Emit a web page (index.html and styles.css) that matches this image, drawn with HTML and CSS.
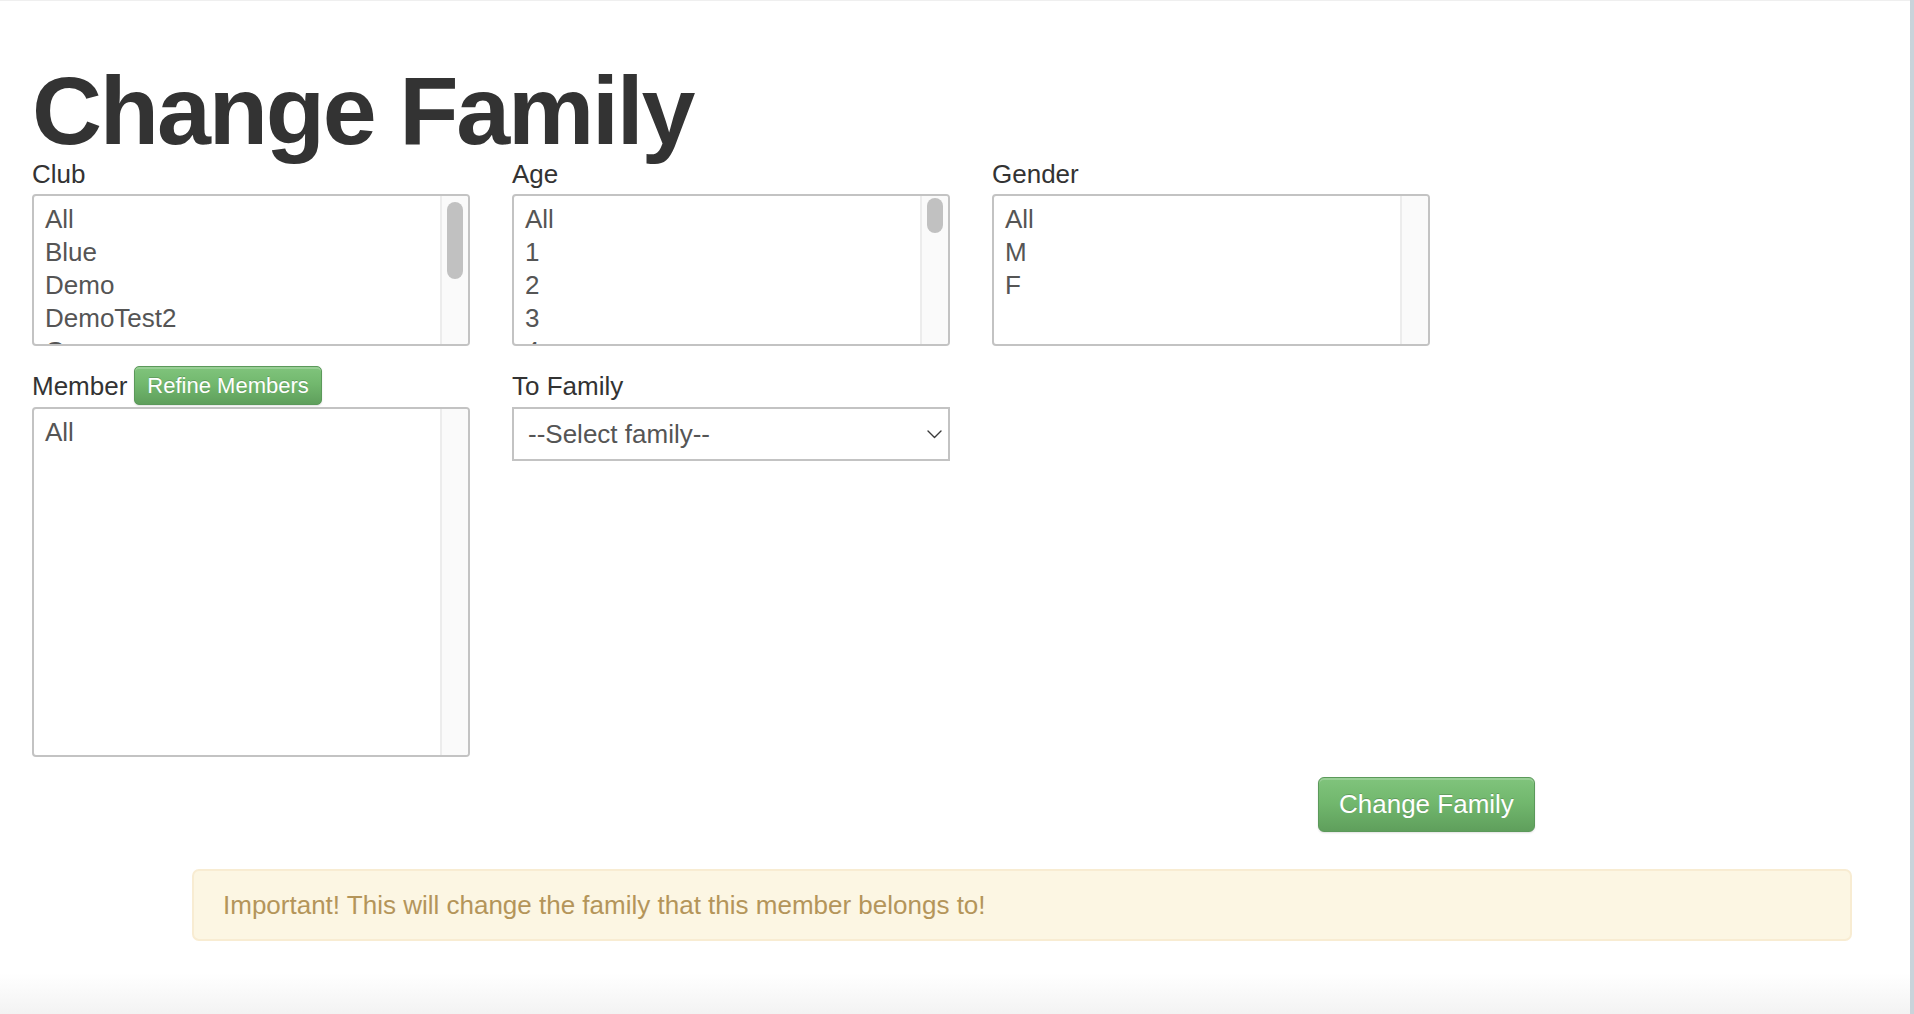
FILE: index.html
```html
<!DOCTYPE html>
<html lang="en">
<head>
<meta charset="utf-8">
<title>Change Family</title>
<link rel="stylesheet" href="styles.css">
</head>
<body>
<main class="page">
  <h1 class="page-title">Change Family</h1>

  <section class="filters">
    <div class="field">
      <div class="field-head"><label class="field-label">Club</label></div>
      <div class="listbox listbox--short" role="listbox" aria-label="Club">
        <div class="listbox-items">
          <div class="opt" role="option">All</div>
          <div class="opt" role="option">Blue</div>
          <div class="opt" role="option">Demo</div>
          <div class="opt" role="option">DemoTest2</div>
          <div class="opt" role="option">Green</div>
        </div>
        <div class="scrollbar"><div class="scrollbar-thumb" style="height: 77px; margin-top: 1px;"></div></div>
      </div>
    </div>

    <div class="field">
      <div class="field-head"><label class="field-label">Age</label></div>
      <div class="listbox listbox--short" role="listbox" aria-label="Age">
        <div class="listbox-items">
          <div class="opt" role="option">All</div>
          <div class="opt" role="option">1</div>
          <div class="opt" role="option">2</div>
          <div class="opt" role="option">3</div>
          <div class="opt" role="option">4</div>
        </div>
        <div class="scrollbar"><div class="scrollbar-thumb" style="height: 35px; margin-top: -3px;"></div></div>
      </div>
    </div>

    <div class="field">
      <div class="field-head"><label class="field-label">Gender</label></div>
      <div class="listbox listbox--short" role="listbox" aria-label="Gender">
        <div class="listbox-items">
          <div class="opt" role="option">All</div>
          <div class="opt" role="option">M</div>
          <div class="opt" role="option">F</div>
        </div>
        <div class="scrollbar"></div>
      </div>
    </div>

    <div class="field">
      <div class="field-head field-head--tall">
        <label class="field-label">Member</label>
        <button class="btn btn-success btn-small" type="button">Refine Members</button>
      </div>
      <div class="listbox listbox--tall" role="listbox" aria-label="Member">
        <div class="listbox-items">
          <div class="opt" role="option">All</div>
        </div>
        <div class="scrollbar"></div>
      </div>
    </div>

    <div class="field">
      <div class="field-head field-head--tall"><label class="field-label">To Family</label></div>
      <div class="select-wrap">
        <select class="select">
          <option>--Select family--</option>
        </select>
        <svg class="select-caret" width="15" height="9" viewBox="0 0 15 9" aria-hidden="true">
          <path d="M1 1 L7.5 7.5 L14 1" fill="none" stroke="#3a3a3a" stroke-width="1.4" stroke-linecap="round" stroke-linejoin="round"/>
        </svg>
      </div>
    </div>
  </section>

  <div class="actions">
    <button class="btn btn-success btn-large" type="button">Change Family</button>
  </div>

  <div class="alert-warning" role="alert">Important! This will change the family that this member belongs to!</div>
</main>
</body>
</html>
```

FILE: styles.css
```css
html {
  margin: 0;
  padding: 0;
  background: linear-gradient(to right, #9fb0bd, #c9d3da);
}

body {
  margin: 0 4px 0 0;
  padding: 0;
  min-height: 1013px;
  border-top: 1px solid #efefef;
  background: linear-gradient(to bottom, #ffffff 0, #ffffff 972px, #f3f3f3 1013px);
  font-family: "Liberation Sans", Arial, Helvetica, sans-serif;
  color: #333333;
}

.page {
  padding: 0 32px;
}

.page-title {
  margin: 62px 0 0 0;
  font-size: 97px;
  line-height: 96px;
  font-weight: 700;
  letter-spacing: -2.2px;
  color: #333333;
}

.filters {
  display: grid;
  grid-template-columns: repeat(3, 438px);
  column-gap: 42px;
  row-gap: 20px;
  align-items: start;
}

.field {
  display: flex;
  flex-direction: column;
}

.field-head {
  display: flex;
  align-items: center;
  gap: 7px;
  height: 30px;
  margin-bottom: 5px;
}

.field-head--tall {
  height: 39px;
  margin-bottom: 2px;
}

.field-label {
  font-size: 26px;
  line-height: 30px;
  color: #333333;
}

.listbox {
  box-sizing: border-box;
  display: flex;
  border: 2px solid #c3c3c3;
  border-radius: 4px;
  overflow: hidden;
  background: #ffffff;
  font-size: 26px;
  line-height: 33px;
  color: #555555;
}

.listbox--short {
  height: 152px;
}

.listbox--tall {
  height: 350px;
}

.listbox-items {
  flex: 1;
  min-width: 0;
  padding: 7px 0 0;
  overflow: hidden;
}

.scrollbar {
  box-sizing: border-box;
  flex: none;
  width: 28px;
  padding: 5px 5px 0 5px;
  background: #fafafa;
  border-left: 2px solid #ececec;
}

.scrollbar-thumb {
  width: 16px;
  border-radius: 8px;
  background: #c1c1c1;
}

.opt {
  padding: 0 11px;
  white-space: nowrap;
}

.select-wrap {
  position: relative;
}

.select {
  box-sizing: border-box;
  display: block;
  width: 100%;
  height: 54px;
  margin: 0;
  padding: 0 40px 0 14px;
  border: 2px solid #c3c3c3;
  border-radius: 0;
  background: #ffffff;
  font-family: "Liberation Sans", Arial, Helvetica, sans-serif;
  font-size: 26px;
  color: #555555;
  -webkit-appearance: none;
  appearance: none;
}

.select-caret {
  position: absolute;
  right: 8px;
  top: 23px;
  pointer-events: none;
}

.btn {
  box-sizing: border-box;
  margin: 0;
  border: 1px solid #5b995a;
  font-family: "Liberation Sans", Arial, Helvetica, sans-serif;
  color: #ffffff;
  white-space: nowrap;
  cursor: pointer;
  text-shadow: 0 -1px 0 rgba(0, 0, 0, 0.18);
}

.btn-success {
  background-image: linear-gradient(to bottom, #80c47c 0, #72b86e 45%, #5f9f5c 100%);
  box-shadow: inset 0 2px 0 rgba(255, 255, 255, 0.2), 0 1px 2px rgba(0, 0, 0, 0.12);
}

.btn-small {
  height: 39px;
  padding: 3px 12px;
  font-size: 22px;
  line-height: 31px;
  border-radius: 5px;
}

.btn-large {
  height: 55px;
  padding: 10px 20px;
  font-size: 26px;
  line-height: 33px;
  border-radius: 6px;
}

.actions {
  display: flex;
  margin-top: 20px;
  padding-left: 1286px;
}

.alert-warning {
  box-sizing: border-box;
  width: 1660px;
  margin: 37px 0 0 160px;
  padding: 16px 29px;
  border: 2px solid #f8ecd2;
  border-radius: 7px;
  background: #fcf6e3;
  color: #b4955a;
  font-size: 26px;
  line-height: 36px;
}
```
